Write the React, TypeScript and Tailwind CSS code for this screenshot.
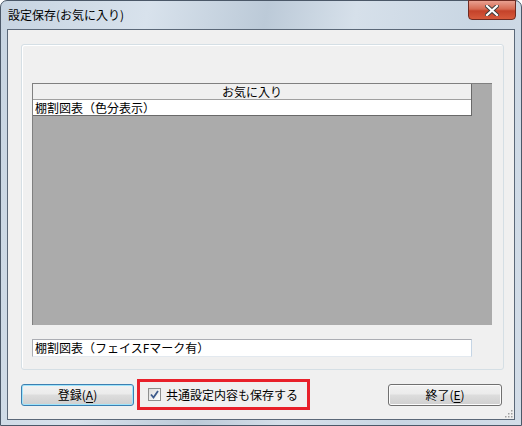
import React from 'react';

const font = { fontFamily: '"Noto Sans CJK JP", "Noto Sans", sans-serif' };

const Win7Button: React.FC<{ label: string; mnemonic: string; isDefault?: boolean; width: string }> = ({ label, mnemonic, isDefault, width }) => (
  <button
    className={`${width} h-[22px] rounded-[3px] border flex items-center justify-center text-[12px] leading-none text-black bg-[linear-gradient(to_bottom,#f2f2f2_0%,#ebebeb_45%,#dddddd_50%,#cfcfcf_100%)] ${
      isDefault ? 'border-[#3c7fb1] shadow-[inset_0_0_0_1px_#9fe4fb]' : 'border-[#707070] shadow-[inset_0_0_0_1px_#fcfcfc]'
    }`}
  >
    {label}(<span className="underline underline-offset-2">{mnemonic}</span>)
  </button>
);

const App: React.FC = () => {
  return (
    <div className="w-[522px] h-[426px] overflow-hidden bg-white" style={font}>
      <div className="w-[522px] h-[426px] flex flex-col rounded-t-[7px] border border-[#4b5868] bg-[linear-gradient(100deg,#c7d4e1_0%,#d8e2ec_25%,#bccad8_45%,#d6e0ea_60%,#c9d6e3_80%,#d3dde8_100%)]">
        {/* Title bar */}
        <div className="h-[28px] flex justify-between pl-[7px] pr-[5px] shrink-0">
          <span className="text-[12px] text-black pt-[6px] leading-[16px]">設定保存(お気に入り)</span>
          <div className="w-[48px] h-[20px] -mt-px rounded-b-[4px] border border-[#6f2b22] bg-[linear-gradient(to_bottom,#e9a090_0%,#d66a52_45%,#c4422a_55%,#d65a3c_100%)] flex items-center justify-center">
            <svg width="14" height="11" viewBox="0 0 14 11">
              <path d="M2 1 L12 10 M12 1 L2 10" stroke="#3b3b3b" strokeWidth="4" strokeLinecap="square" />
              <path d="M2 1 L12 10 M12 1 L2 10" stroke="#ffffff" strokeWidth="2.2" strokeLinecap="square" />
            </svg>
          </div>
        </div>

        {/* Client area */}
        <div className="flex-1 mx-[6px] mb-[5px] border border-[#5b6878] bg-[#f0f0f0] relative">
          {/* Group box */}
          <div className="ml-[13px] mt-[14px] w-[483px] h-[326px] rounded-[3px] border border-[#d5dfe5] shadow-[inset_1px_1px_0_#ffffff] flex flex-col pl-[10px]">
            {/* List */}
            <div className="mt-[38px] w-[460px] h-[242px] bg-[#ababab] border-t border-l border-[#808080]">
              <div className="w-[439px] border-r border-[#696969]">
                <div className="h-[16px] bg-[#f0f0f0] border-b border-[#a0a0a0] flex items-center justify-center text-[12px] leading-none text-black">
                  お気に入り
                </div>
                <div className="h-[16px] bg-white border-b border-[#696969] flex items-center pl-[2px] text-[12px] leading-none text-black">
                  棚割図表（色分表示）
                </div>
              </div>
            </div>
            {/* Text field */}
            <div className="mt-[14px] w-[440px] h-[18px] bg-white border border-[#abadb3] border-r-[#c5d5e5] border-b-[#e3e9ef] flex items-center pl-[2px] text-[12px] leading-none text-black">
              棚割図表（フェイスFマーク有）
            </div>
          </div>

          {/* Bottom row */}
          <div className="flex items-center mt-[9px] ml-[13px] h-[31px]">
            <Win7Button label="登録" mnemonic="A" isDefault width="w-[113px]" />
            <div className="ml-[3px] w-[173px] h-[31px] border-[3px] border-[#e8202a] flex items-center pl-[8px]">
              <div className="w-[13px] h-[13px] border border-[#8e8f8f] bg-[linear-gradient(135deg,#dcdcdc,#ffffff)] flex items-center justify-center">
                <svg width="9" height="9" viewBox="0 0 9 9">
                  <path d="M1 4.5 L3.5 7.5 L8 1" fill="none" stroke="#3d5a8c" strokeWidth="1.8" />
                </svg>
              </div>
              <span className="ml-[5px] text-[12px] leading-none text-black">共通設定内容も保存する</span>
            </div>
            <div className="ml-[78px]">
              <Win7Button label="終了" mnemonic="E" width="w-[114px]" />
            </div>
          </div>

          {/* Size grip */}
          <svg className="absolute right-[1px] bottom-[1px]" width="10" height="10" viewBox="0 0 10 10">
            {[[8, 2], [8, 5], [5, 5], [8, 8], [5, 8], [2, 8]].map(([x, y], i) => (
              <rect key={i} x={x} y={y} width="1.5" height="1.5" fill="#a0a0a0" />
            ))}
          </svg>
        </div>
      </div>
    </div>
  );
};

export default App;
